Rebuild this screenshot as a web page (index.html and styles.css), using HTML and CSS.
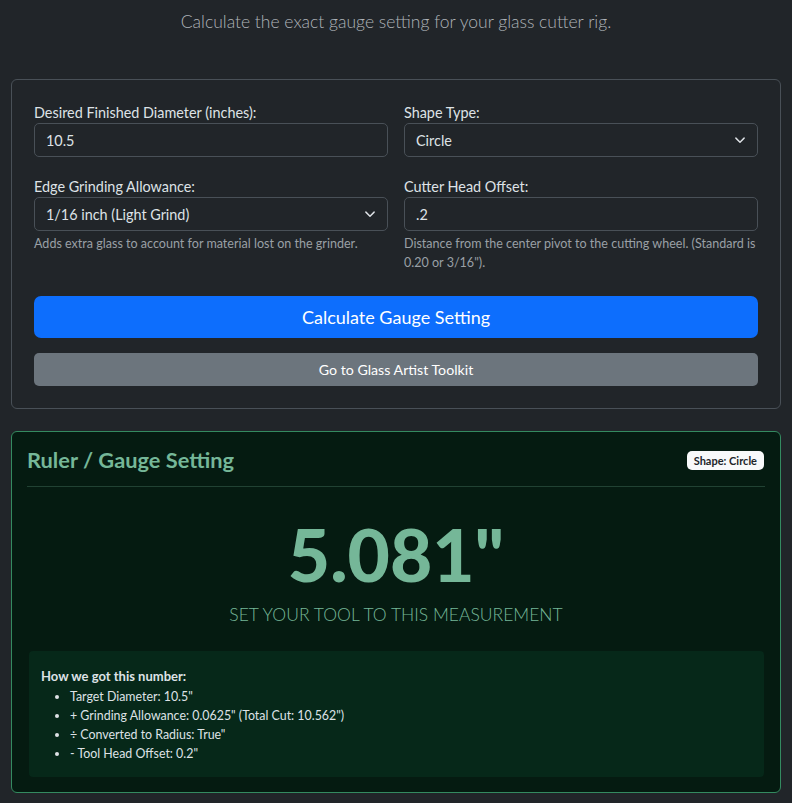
FILE: index.html
```html
<!DOCTYPE html>
<html lang="en">
<head>
<meta charset="utf-8">
<title>Glass Cutter Gauge Calculator</title>
<link rel="stylesheet" href="styles.css">
</head>
<body>
<main class="container">
  <p class="lead">Calculate the exact gauge setting for your glass cutter rig.</p>

  <section class="card form-card">
    <div class="form-grid">
      <div class="field">
        <label class="label" for="diameter">Desired Finished Diameter (inches):</label>
        <input class="control" id="diameter" type="text" value="10.5">
      </div>
      <div class="field">
        <label class="label" for="shape">Shape Type:</label>
        <div class="select-wrap">
          <select class="control select" id="shape">
            <option>Circle</option>
          </select>
          <svg class="chevron" viewBox="0 0 16 16" width="12" height="12" aria-hidden="true"><path d="M2.5 5.5l5.5 5.5 5.5-5.5" fill="none" stroke="#dee2e6" stroke-width="1.9" stroke-linecap="round" stroke-linejoin="round"/></svg>
        </div>
      </div>
      <div class="field">
        <label class="label" for="grind">Edge Grinding Allowance:</label>
        <div class="select-wrap">
          <select class="control select" id="grind">
            <option>1/16 inch (Light Grind)</option>
          </select>
          <svg class="chevron" viewBox="0 0 16 16" width="12" height="12" aria-hidden="true"><path d="M2.5 5.5l5.5 5.5 5.5-5.5" fill="none" stroke="#dee2e6" stroke-width="1.9" stroke-linecap="round" stroke-linejoin="round"/></svg>
        </div>
        <div class="help">Adds extra glass to account for material lost on the grinder.</div>
      </div>
      <div class="field">
        <label class="label" for="offset">Cutter Head Offset:</label>
        <input class="control" id="offset" type="text" value=".2">
        <div class="help">Distance from the center pivot to the cutting wheel. (Standard is 0.20 or 3/16").</div>
      </div>
    </div>
    <button class="btn btn-primary" type="button">Calculate Gauge Setting</button>
    <button class="btn btn-secondary" type="button">Go to Glass Artist Toolkit</button>
  </section>

  <section class="card result-card">
    <div class="result-head">
      <h4 class="result-title">Ruler / Gauge Setting</h4>
      <span class="badge">Shape: Circle</span>
    </div>
    <hr class="divider">
    <div class="result-value">5.081"</div>
    <p class="result-caption">SET YOUR TOOL TO THIS MEASUREMENT</p>
    <div class="breakdown">
      <div class="breakdown-title">How we got this number:</div>
      <ul class="breakdown-list">
        <li>Target Diameter: 10.5"</li>
        <li>+ Grinding Allowance: 0.0625" (Total Cut: 10.562")</li>
        <li>÷ Converted to Radius: True"</li>
        <li>- Tool Head Offset: 0.2"</li>
      </ul>
    </div>
  </section>
</main>
</body>
</html>
```

FILE: styles.css
```css
* { box-sizing: border-box; }

html, body {
  margin: 0;
  padding: 0;
  background: #212529;
}

body {
  font-family: Lato, "Noto Sans", "Liberation Sans", sans-serif;
  font-size: 14px;
  line-height: 1.5;
  color: #dee2e6;
}

.container {
  padding: 9px 11px 9px;
}

.lead {
  margin: 0 0 44px;
  text-align: center;
  font-size: 17.5px;
  line-height: 26px;
  font-weight: 300;
  color: #aeb3b8;
}

.card {
  border-radius: 6px;
  border: 1px solid #495057;
}

.form-card {
  padding: 22px;
  display: flex;
  flex-direction: column;
}

.form-grid {
  display: grid;
  grid-template-columns: 1fr 1fr;
  column-gap: 16px;
  row-gap: 19px;
}

.field {
  display: flex;
  flex-direction: column;
}

.label {
  display: block;
  line-height: 21px;
  font-size: 14.4px;
  color: #dee2e6;
}

.control {
  display: block;
  width: 100%;
  height: 34px;
  margin: 0;
  padding: 0 11px;
  font-family: inherit;
  font-size: 14.4px;
  color: #dee2e6;
  background: #212529;
  border: 1px solid #495057;
  border-radius: 5px;
  outline: none;
}

.select-wrap {
  position: relative;
}

.select {
  appearance: none;
  -webkit-appearance: none;
  padding-right: 36px;
}

.chevron {
  position: absolute;
  right: 12px;
  top: 11px;
  pointer-events: none;
}

.help {
  margin-top: 4px;
  font-size: 12.55px;
  line-height: 18.5px;
  color: #9aa0a6;
}

.btn {
  display: block;
  width: 100%;
  border: 0;
  color: #fff;
  font-family: inherit;
  cursor: pointer;
}

.btn-primary {
  margin-top: 24px;
  height: 42px;
  background: #0d6efd;
  font-size: 18px;
  border-radius: 7px;
}

.btn-secondary {
  margin-top: 15px;
  height: 33px;
  background: #6c757d;
  font-size: 14.2px;
  border-radius: 5px;
}

.result-card {
  margin-top: 22px;
  padding: 15px;
  background: #051b11;
  border-color: #348a60;
  color: #75b798;
}

.result-head {
  display: flex;
  align-items: center;
  justify-content: space-between;
}

.result-title {
  margin: 0;
  font-size: 21.8px;
  line-height: 26px;
  font-weight: 700;
  color: #75b798;
}

.badge {
  background: #f8f9fa;
  color: #212529;
  font-size: 11px;
  font-weight: 700;
  line-height: 1;
  padding: 4px 7px;
  border-radius: 5px;
  margin-right: 1px;
}

.divider {
  margin: 13px 0 31px;
  border: 0;
  border-top: 1px solid #214233;
}

.result-value {
  text-align: center;
  font-size: 73px;
  line-height: 72px;
  font-weight: 900;
  color: #75b798;
}

.result-caption {
  margin: 12px 0 23px;
  text-align: center;
  font-size: 17.5px;
  line-height: 26px;
  font-weight: 300;
  color: #75b798;
}

.breakdown {
  margin: 0 1px 0 2px;
  padding: 15px 12px 14px;
  background: #062819;
  border-radius: 4px;
  color: #dee2e6;
}

.breakdown-title {
  font-weight: 700;
  font-size: 13px;
  line-height: 20px;
}

.breakdown-list {
  margin: 1px 0 0;
  padding-left: 29px;
  font-size: 12.4px;
  line-height: 19px;
}
```
